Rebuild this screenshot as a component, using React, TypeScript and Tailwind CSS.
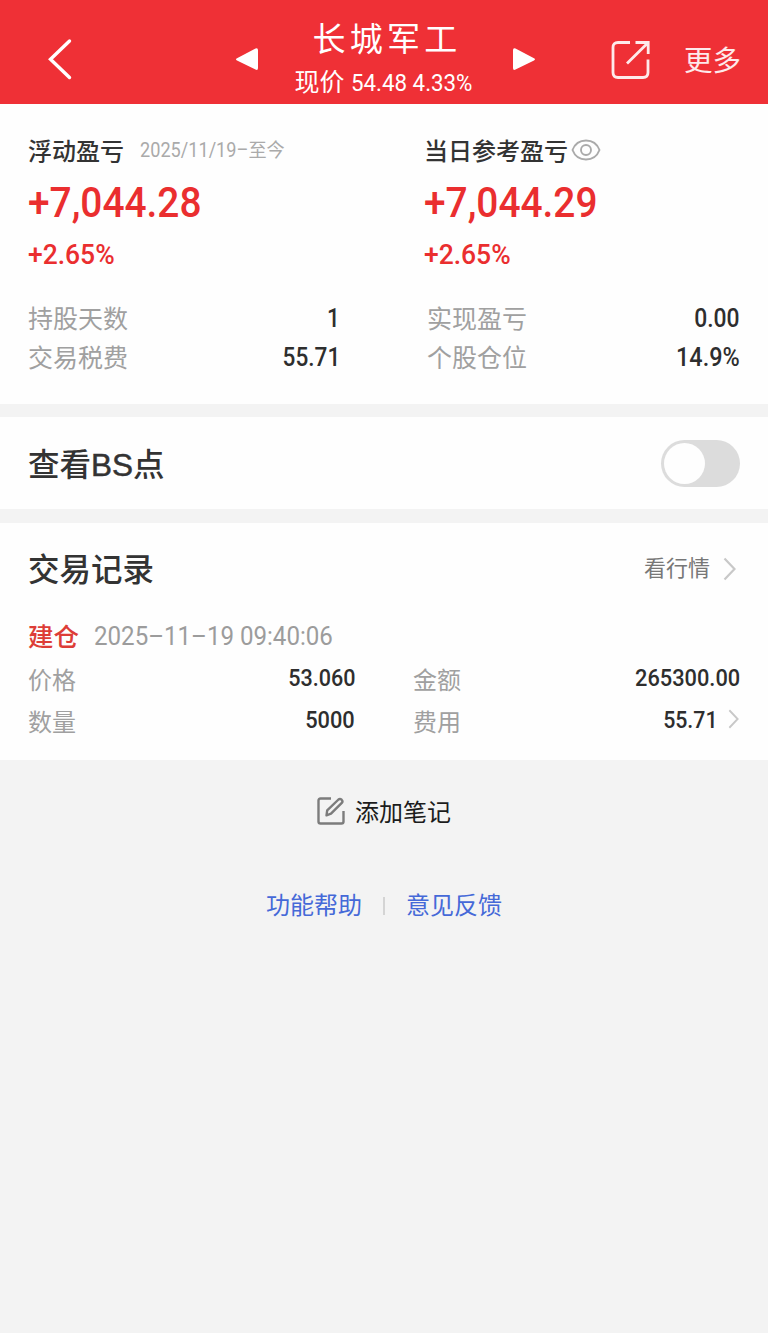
import clsx from "clsx";
import type { ReactNode } from "react";

const cjk = "font-['Noto_Sans_CJK_SC',sans-serif]";
const digits = "font-[Roboto,'Noto_Sans_CJK_SC',sans-serif]";

interface FieldProps {
  label: string;
  value: string;
  className?: string;
  valueClassName?: string;
  children?: ReactNode;
}

function Field({ label, value, className, valueClassName, children }: FieldProps) {
  return (
    <div className={clsx("flex items-center justify-between", className)}>
      <span className="text-[#a0a0a0]">{label}</span>
      <span className="flex items-center">
        <span
          className={clsx(
            "inline-block origin-right font-medium text-[#2e2e2e]",
            digits,
            valueClassName,
          )}
        >
          {value}
        </span>
        {children}
      </span>
    </div>
  );
}

function Profit({ amount, percent }: { amount: string; percent: string }) {
  return (
    <div className={clsx("font-medium text-[#ea2e2f]", digits)}>
      <div className="flex h-[70px] items-center text-[42px]">
        <span className="inline-block origin-left scale-x-[0.925]">{amount}</span>
      </div>
      <div className="flex h-9 items-center pt-px text-[27px]">
        <span className="inline-block origin-left scale-x-[0.98]">{percent}</span>
      </div>
    </div>
  );
}

function Header() {
  return (
    <header className="flex h-[104px] items-start bg-[#ef3036] text-white">
      <svg className="mt-[38px] ml-[47px]" width="26" height="44" viewBox="0 0 26 44" fill="none">
        <path d="M22.5 3 3.5 21.3 22.5 39.5" stroke="currentColor" strokeWidth="3.4" strokeLinecap="round" />
      </svg>
      <svg className="mt-[47px] ml-[162px]" width="25" height="25" viewBox="0 0 25 25">
        <path d="M2 11.3 20.5 1.6Q23 .6 23 3.3V21q0 2.6-2.5 1.6L2 13.4q-2-1 0-2.1Z" fill="currentColor" />
      </svg>
      <div className="flex w-[246px] flex-col items-center">
        <div className="mt-[13px] h-12 pl-2 text-[33px] leading-[49px] tracking-[4.2px]">
          长城军工
        </div>
        <div className="flex h-10 items-center justify-center">
          <span className="text-[25px]">现价</span>
          <span className={clsx("ml-[6px] inline-block w-[121px] origin-left scale-x-[0.93] pt-[3px] text-[24px] whitespace-nowrap", digits)}>
            54.48 4.33%
          </span>
        </div>
      </div>
      <svg className="mt-[47px] ml-[5px]" width="25" height="25" viewBox="0 0 25 25">
        <path d="M23 11.3 4.5 1.6Q2 .6 2 3.3V21q0 2.6 2.5 1.6L23 13.4q2-1 0-2.1Z" fill="currentColor" />
      </svg>
      <svg className="mt-[39px] ml-[74px]" width="42" height="42" viewBox="0 0 42 42" fill="none" stroke="currentColor" strokeOpacity="0.9" strokeWidth="2.8">
        <path d="M20 3.5H8Q3 3.5 3 8.5V33.5Q3 38.5 8 38.5H33Q38 38.5 38 33.5V20.5" />
        <path d="M25.5 3.5H38.2V15M37.5 4.2 17 24.5" />
      </svg>
      <div className="mt-[39px] ml-[32px] text-[28.5px] leading-10 whitespace-nowrap text-white/90">
        更多
      </div>
    </header>
  );
}

function Chevron({ className }: { className?: string }) {
  return (
    <svg className={className} width="13" height="24" viewBox="0 0 13 24" fill="none">
      <path d="M1.5 1.5 11.5 12 1.5 22.5" stroke="#c8c8c8" strokeWidth="2.2" />
    </svg>
  );
}

export default function App() {
  return (
    <div className={clsx("min-h-[1333px] w-[768px] bg-[#f3f3f3]", cjk)}>
      <Header />

      <section className="h-[300px] bg-[#fefefe] pt-[29px]">
        <div className="grid grid-cols-[396px_1fr] pl-7">
          <div>
            <div className="flex h-[34px] items-center">
              <span className="text-[24px] font-medium text-[#333]">浮动盈亏</span>
              <span className={clsx("ml-[16px] inline-block origin-left scale-x-[0.93] pt-[2px] text-[19.5px] text-[#aaa]", digits)}>
                2025/11/19–至今
              </span>
            </div>
            <Profit amount="+7,044.28" percent="+2.65%" />
          </div>
          <div>
            <div className="flex h-[34px] items-center">
              <span className="text-[24px] font-medium text-[#333]">当日参考盈亏</span>
              <svg className="ml-[3px]" width="30" height="22" viewBox="0 0 30 22" fill="none" stroke="#aaa" strokeWidth="1.9">
                <path d="M1.5 11C4 4.5 9.500 1.500 15 1.500S26 4.500 28.500 11C26 17.500 20.500 20.500 15 20.500S4 17.500 1.500 11Z" />
                <circle cx="15" cy="11" r="5" />
              </svg>
            </div>
            <Profit amount="+7,044.29" percent="+2.65%" />
          </div>
        </div>
        <div className="mt-[25px] grid grid-cols-[312px_313px] gap-x-[87px] pl-7 text-[25px]">
          <Field className="h-[39px]" label="持股天数" value="1" valueClassName="pt-px text-[26px] scale-x-[0.86]" />
          <Field className="h-[39px]" label="实现盈亏" value="0.00" valueClassName="pt-px text-[26px] scale-x-[0.88]" />
          <Field className="h-[39px]" label="交易税费" value="55.71" valueClassName="pt-px text-[26px] scale-x-[0.87]" />
          <Field className="h-[39px]" label="个股仓位" value="14.9%" valueClassName="pt-px text-[26px] scale-x-[0.9]" />
        </div>
      </section>

      <section className="mt-[13px] flex h-[92px] items-center justify-between bg-[#fefefe] pr-7 pl-7">
        <span className="pt-[5px] font-['Liberation_Sans','Noto_Sans_CJK_SC',sans-serif] text-[31.5px] font-medium text-[#333]">
          查看<span className="[-webkit-text-stroke:0.5px_#333]">BS</span>点
        </span>
        <button
          type="button"
          role="switch"
          aria-checked="false"
          aria-label="查看BS点"
          className="flex h-[47px] w-[79px] items-center rounded-full bg-[#dcdcdc] pl-[3px]"
        >
          <span className="size-[41px] rounded-full bg-[#fefefe]" />
        </button>
      </section>

      <section className="mt-[14px] h-[237px] bg-[#fefefe] pt-[24px] pr-7 pl-7">
        <div className="flex h-[42px] items-center justify-between">
          <h2 className="text-[31.5px] font-medium text-[#333]">交易记录</h2>
          <span className="flex items-center pr-[4px] text-[22px] text-[#777]">
            <span className="-mt-[3px]">看行情</span>
            <Chevron className="mt-[2px] ml-[13px]" />
          </span>
        </div>
        <div className="mt-[25px] flex h-[42px] items-center">
          <span className="text-[25.5px] font-medium text-[#dd3d37]">建仓</span>
          <span className={clsx("ml-[15px] inline-block origin-left scale-x-[0.945] pt-[3px] text-[25.5px] text-[#9c9c9c]", digits)}>
            2025–11–19 09:40:06
          </span>
        </div>
        <div className="mt-px grid grid-cols-[327px_327px] gap-x-[58px] text-[24px]">
          <Field className="h-[43px]" label="价格" value="53.060" valueClassName="-mt-px text-[24.5px] scale-x-[0.88]" />
          <Field className="h-[43px]" label="金额" value="265300.00" valueClassName="-mt-px text-[24.5px] scale-x-[0.89]" />
          <Field className="h-[42px]" label="数量" value="5000" valueClassName="-mt-px text-[24.5px] scale-x-[0.89]" />
          <Field className="h-[42px]" label="费用" value="55.71" valueClassName="-mt-px text-[24.5px] scale-x-[0.87]">
            <Chevron className="-mt-1 ml-[9px] h-5" />
          </Field>
        </div>
      </section>

      <div className="mt-[31px] flex h-10 items-center justify-center text-[24px] text-[#1c1c1c]">
        <svg className="mr-[10px]" width="28" height="28" viewBox="0 0 28 28" fill="none" stroke="#7c7c7c" strokeWidth="2.4" strokeLinejoin="round">
          <path d="M14 1.5H3.5Q1.500 1.500 1.500 3.500V24.500Q1.500 26.500 3.500 26.500H24.500Q26.500 26.500 26.500 24.500V14" />
          <path d="M9.500 18.300 10.200 13.300 21.500 2.500Q23 1.200 24.600 2.700 26.200 4.400 24.800 5.800L14 16.700Z" />
        </svg>
        添加笔记
      </div>

      <div className="mt-[53px] flex h-10 items-center justify-center text-[24px] text-[#4569d8]">
        <span>功能帮助</span>
        <span className="mt-1 mr-[21px] ml-[21px] h-[18px] w-[2px] bg-[#d4d4d4]" />
        <span>意见反馈</span>
      </div>
    </div>
  );
}
